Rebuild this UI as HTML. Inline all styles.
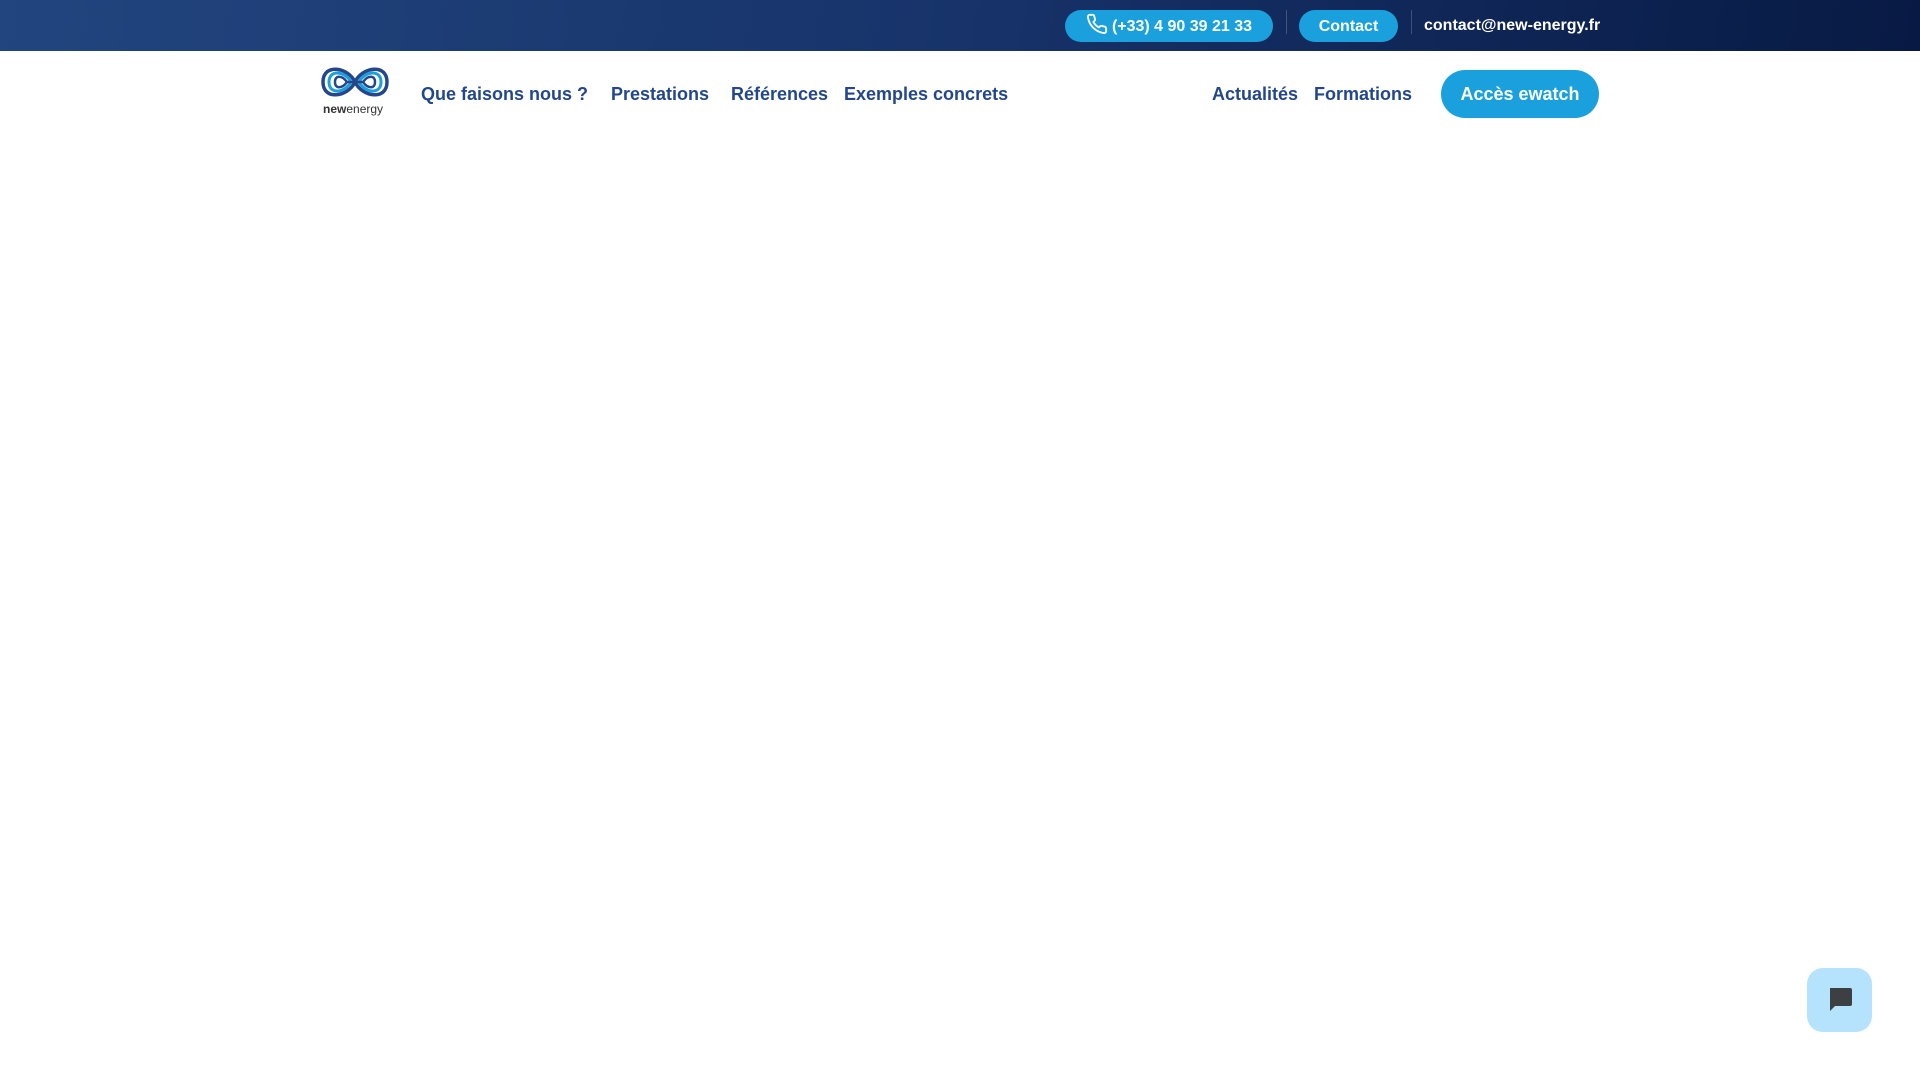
<!DOCTYPE html>
<html><head><meta charset="utf-8"><style>
*{margin:0;padding:0;box-sizing:border-box}
body{width:1920px;height:1080px;background:#fff;font-family:"Liberation Sans",sans-serif;position:relative;overflow:hidden}
.top{position:absolute;left:0;top:0;width:1920px;height:51px;background:linear-gradient(100deg,#22457f 0%,#17336a 50%,#081a44 100%)}
.pill{position:absolute;top:10px;height:32px;border-radius:16px;background:#1aa0dc;color:#fff;font-weight:bold;font-size:16px;line-height:33px;text-align:center}
.sep{position:absolute;top:10px;width:1px;height:24px;background:rgba(255,255,255,.2)}
.nav{position:absolute;top:84px;font-size:18px;font-weight:bold;color:#23478a;white-space:nowrap}
</style></head><body>
<div class="top">
<div class="pill" style="left:1065px;width:208px"><svg width="22" height="22" viewBox="0 0 24 24" style="vertical-align:-4px;margin-right:4px" fill="none" stroke="#fff" stroke-width="2" stroke-linecap="round" stroke-linejoin="round"><path d="M22 16.9v3a2 2 0 0 1-2.2 2 19.8 19.8 0 0 1-8.6-3.1 19.5 19.5 0 0 1-6-6A19.8 19.8 0 0 1 2.1 4.2 2 2 0 0 1 4.1 2h3a2 2 0 0 1 2 1.7c.1.9.4 1.8.7 2.7a2 2 0 0 1-.5 2.1L8 9.8a16 16 0 0 0 6 6l1.3-1.3a2 2 0 0 1 2.1-.4c.9.3 1.8.6 2.7.7a2 2 0 0 1 1.7 2z"/></svg>(+33) 4 90 39 21 33</div>
<div class="sep" style="left:1286px"></div>
<div class="pill" style="left:1299px;width:99px">Contact</div>
<div class="sep" style="left:1411px"></div>
<div style="position:absolute;left:1424px;top:17px;color:#fff;font-weight:bold;font-size:16px">contact@new-energy.fr</div>
</div>
<svg style="position:absolute;left:320px;top:61px" width="70" height="56" viewBox="0 0 70 56">
<g fill="none" stroke-linecap="round">
<path d="M35 21 C28 6 3 2 3 21 C3 40 28 36 35 21 C42 6 67 2 67 21 C67 40 42 36 35 21" stroke="#23478a" stroke-width="3.5"/>
<path d="M31 21 C25 10 9 8 9 21 C9 34 25 32 31 21 M39 21 C45 10 61 8 61 21 C61 34 45 32 39 21" stroke="#1aa0dc" stroke-width="3"/>
<path d="M27 21 C22 14 15 14 15 21 C15 28 22 28 27 21 L43 21 C48 14 55 14 55 21 C55 28 48 28 43 21" stroke="#23478a" stroke-width="2.5"/>
</g>
<text x="3" y="52" font-family="Liberation Sans,sans-serif" font-size="12" fill="#333"><tspan font-weight="bold">new</tspan>energy</text>
</svg>
<div class="nav" style="left:421px">Que faisons nous ?</div>
<div class="nav" style="left:611px">Prestations</div>
<div class="nav" style="left:731px">Références</div>
<div class="nav" style="left:844px">Exemples concrets</div>
<div class="nav" style="left:1212px">Actualités</div>
<div class="nav" style="left:1314px">Formations</div>
<div style="position:absolute;left:1441px;top:70px;width:158px;height:48px;border-radius:24px;background:#1aa0dc;color:#fff;font-weight:bold;font-size:18px;line-height:48px;text-align:center">Accès ewatch</div>
<div style="position:absolute;left:1807px;top:968px;width:65px;height:64px;border-radius:16px;background:#b5e2fd">
<svg style="position:absolute;left:19px;top:18px" width="28" height="28" viewBox="0 0 28 28"><path d="M4 2 H24 Q26 2 26 4 V18 Q26 20 24 20 H9 L4 25 Z" fill="#3c4043"/></svg>
</div>
</body></html>
